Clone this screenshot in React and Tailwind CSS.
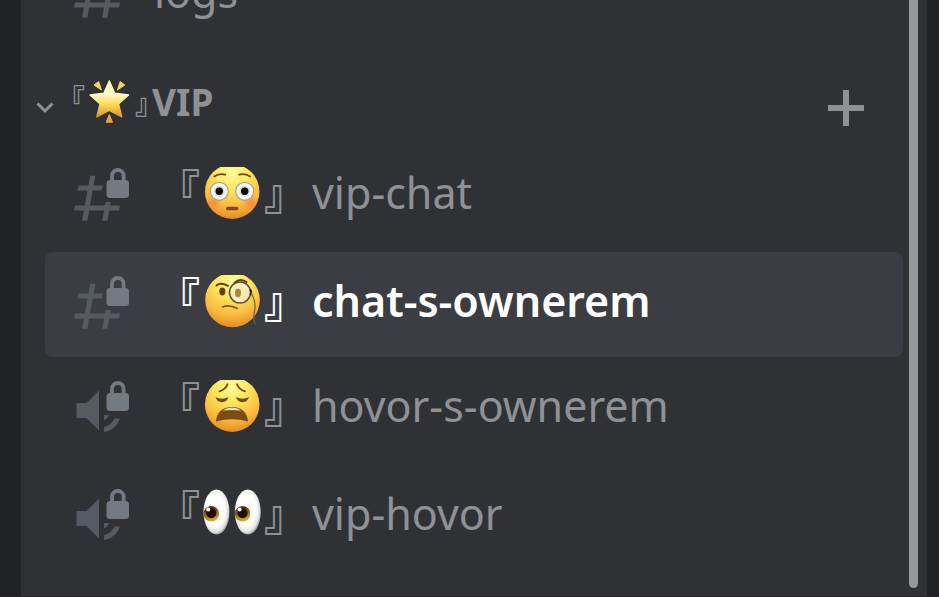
import clsx from "clsx";

const channels = [
    { name: "vip-chat", type: "text", emoji: "flushed" },
    { name: "chat-s-ownerem", type: "text", emoji: "monocle", active: true },
    { name: "hovor-s-ownerem", type: "voice", emoji: "weary" },
    { name: "vip-hovor", type: "voice", emoji: "eyes" },
];

const Lock = () => (
    <g>
        <path d="M40 16V9.8a5.8 5.8 0 0 1 11.6 0V16" fill="none" stroke="#757981" strokeWidth="3.8" />
        <rect x="34.5" y="14" width="22.5" height="18" rx="3.5" fill="#757981" />
    </g>
);

const HashIcon = ({ locked }) => (
    <svg viewBox="0 0 60 60" className="size-[60px] shrink-0 fill-[#565a62]" aria-hidden="true">
        <path d="M18.2 9.7h5.1L15.3 54.8h-5.2z" />
        <path d={locked ? "M6.4 19.4h24.4l-1 5.2H5.4z" : "M6.4 19.4h43l-1 5.2H5.4z"} />
        <path d="M3 39.4h45l-.9 5.2H2z" />
        {locked ? (
            <path d="M33.6 36h5.2l-3.4 18.8h-5.2z" />
        ) : (
            <path d="M38.2 9.7h5.1l-8 45.1h-5.2z" />
        )}
        {locked && <Lock />}
    </svg>
);

const SpeakerIcon = () => (
    <svg viewBox="0 0 60 60" className="size-[60px] shrink-0 fill-[#565a62]" aria-hidden="true">
        <path d="M4.5 24h10L27 11.5v40L14.5 39h-10z" />
        <path d="M32 36h5c-.8 2.6-2.6 4.4-5 5.2z" />
        <path d="M42.5 39.5H48C45.5 46.7 39.5 52 32 53.2v-5.2c4.7-1 8.5-4.2 10.5-8.5z" />
        <Lock />
    </svg>
);

const FaceGradient = ({ id }) => (
    <defs>
        <radialGradient id={id} cx="0.5" cy="0.15" r="0.9">
            <stop offset="0" stopColor="#fffc9a" />
            <stop offset="0.35" stopColor="#fde65c" />
            <stop offset="0.7" stopColor="#f9b940" />
            <stop offset="1" stopColor="#e0811d" />
        </radialGradient>
        <radialGradient id={`${id}-blush`}>
            <stop offset="0" stopColor="#f3673a" stopOpacity="0.5" />
            <stop offset="1" stopColor="#f3673a" stopOpacity="0" />
        </radialGradient>
    </defs>
);

const Flushed = () => (
    <>
        <FaceGradient id="flushed" />
        <circle cx="30.2" cy="25.6" r="27.3" fill="url(#flushed)" />
        <circle cx="12" cy="36" r="8" fill="url(#flushed-blush)" />
        <circle cx="48.5" cy="36" r="8" fill="url(#flushed-blush)" />
        <g fill="none" stroke="#7a3c12" strokeWidth="1.8" strokeLinecap="round">
            <path d="M12.3 10.5q5-3.7 11-1.8" />
            <path d="M48.1 10.5q-5-3.7-11-1.8" />
        </g>
        <g fill="#f7f7f5" stroke="#a99f94" strokeWidth="1.2">
            <circle cx="17.3" cy="25.3" r="9" />
            <circle cx="42.7" cy="25.3" r="9" />
        </g>
        <circle cx="17.3" cy="25.3" r="5.5" fill="#dcdcdc" />
        <circle cx="42.7" cy="25.3" r="5.5" fill="#dcdcdc" />
        <circle cx="17.3" cy="25.3" r="3.7" fill="#0c0a09" />
        <circle cx="42.7" cy="25.3" r="3.7" fill="#0c0a09" />
        <rect x="24" y="40.7" width="12.3" height="3.5" rx="1.5" fill="#87471a" />
    </>
);

const Monocle = () => (
    <>
        <FaceGradient id="monocle" />
        <circle cx="30.5" cy="26" r="27.3" fill="url(#monocle)" />
        <path d="M14.5 11.5q4-3.5 11.5.3" fill="none" stroke="#6b3a10" strokeWidth="2" strokeLinecap="round" />
        <ellipse cx="20.3" cy="17.5" rx="3" ry="4" fill="#6b3a10" />
        <path d="M32.5 9q5-5.5 12-1" fill="none" stroke="#6b3a10" strokeWidth="2" strokeLinecap="round" />
        <circle cx="38" cy="18.5" r="10.5" fill="#eef0c8" fillOpacity="0.75" stroke="#55503f" strokeWidth="1.5" />
        <ellipse cx="36" cy="19" rx="3" ry="4.2" fill="#a98443" />
        <path d="M40 10l4 4M32 24l6 3" stroke="#ffffff" strokeOpacity="0.5" strokeWidth="2" />
        <path d="M47.8 15.5q2 1 1 5.5" fill="none" stroke="#26241f" strokeWidth="2" />
        <path d="M49 19c5 8 5 14 3 21-.6 4 0 7 1.5 10.5" fill="none" stroke="#6c6046" strokeWidth="1.2" />
        <path d="M20.5 33q7-2.8 14.8 1.5" fill="none" stroke="#87561a" strokeWidth="1.6" strokeLinecap="round" />
    </>
);

const Weary = () => (
    <>
        <FaceGradient id="weary" />
        <circle cx="30.2" cy="25.6" r="27.3" fill="url(#weary)" />
        <g fill="none" stroke="#7a4514" strokeWidth="1.9" strokeLinecap="round">
            <path d="M17.5 12.3q6-1.5 8-7" />
            <path d="M43 12.3q-6-1.5-8-7" />
        </g>
        <g fill="#7a4514">
            <path d="M13.5 18q6.5 3.5 13 0-1.5 5.2-6.5 5.2t-6.5-5.2z" />
            <path d="M34 18q6.5 3.5 13 0-1.5 5.2-6.5 5.2t-6.5-5.2z" />
        </g>
        <path d="M14 42.5C14.5 33 21 28 30 28s15.5 5 16 14.5q-16-4.5-32 0z" fill="#7d4d10" />
        <path d="M20.5 31.5Q30 25.5 39.5 31.5q-9.5-1-19 0z" fill="#e4e2dc" />
    </>
);

const Eyes = () => (
    <>
        <defs>
            <radialGradient id="eyeball" cx="0.45" cy="0.45" r="0.55">
                <stop offset="0.65" stopColor="#ffffff" />
                <stop offset="0.9" stopColor="#e3e3e3" />
                <stop offset="1" stopColor="#a9a9a9" />
            </radialGradient>
            <linearGradient id="iris" x1="0" y1="0" x2="0.3" y2="1">
                <stop offset="0.3" stopColor="#6b3407" />
                <stop offset="1" stopColor="#d8a72c" />
            </linearGradient>
        </defs>
        {[14.5, 45.8].map((cx) => (
            <g key={cx}>
                <ellipse cx={cx} cy="25" rx="13" ry="22.5" fill="url(#eyeball)" />
                <circle cx={cx - 5.2} cy="26.7" r="7.7" fill="url(#iris)" />
                <circle cx={cx - 5.2} cy="26.2" r="5" fill="#1d0d04" />
                <circle cx={cx - 8.2} cy="22.6" r="2" fill="#ffffff" />
            </g>
        ))}
    </>
);

const emojis = { flushed: Flushed, monocle: Monocle, weary: Weary, eyes: Eyes };

const Star = () => (
    <svg viewBox="0 0 44 46" className="h-[46px] w-[44px] shrink-0" aria-hidden="true">
        <defs>
            <linearGradient id="star" x1="0" y1="0" x2="0" y2="1">
                <stop offset="0" stopColor="#fff3b0" />
                <stop offset="0.35" stopColor="#fffccf" />
                <stop offset="0.65" stopColor="#fbdc58" />
                <stop offset="1" stopColor="#dd922a" />
            </linearGradient>
        </defs>
        <path
            d="M21.3 2l5.4 12.2 13.8 1.8-10 9 3.2 12.8-12.4-6.5-12.4 6.5 3.2-12.8-10-9 13.8-1.8z"
            fill="url(#star)"
            stroke="url(#star)"
            strokeWidth="1.5"
            strokeLinejoin="round"
        />
        <g fill="#f6d45c" stroke="#f6d45c" strokeLinejoin="round">
            <path d="M6 6l4.7-3.4 2.7 8.4z" />
            <path d="M36.8 6l-4.7-3.4-2.7 8.4z" />
            <path d="M21.3 35.5l3.2 7.7h-6.4z" fill="#e9a53a" stroke="#e9a53a" />
        </g>
    </svg>
);

const Bracket = ({ className, children }) => (
    <span className={clsx("font-['Noto_Sans_CJK_JP',sans-serif] font-bold", className)}>{children}</span>
);

const Channel = ({ name, type, emoji, active }) => {
    const Emoji = emojis[emoji];

    return (
        <li className="mb-[3px] even:mb-0">
            <a
                href="#"
                className={clsx(
                    "flex h-[105px] items-center rounded-lg pb-[2px] pl-[27px] text-[43px] whitespace-nowrap",
                    active ? "bg-[#3c3d42] font-semibold text-white" : "text-[#8f9195]"
                )}
            >
                {type === "voice" ? <SpeakerIcon /> : <HashIcon locked />}
                <span className="ml-[22px] flex items-center">
                    <Bracket className="w-12 pr-[2px] pb-4 text-right">『</Bracket>
                    <svg viewBox="0 1 60 58" className="h-[58px] w-[60px] shrink-0" aria-hidden="true">
                        <Emoji />
                    </svg>
                    <Bracket className="w-[50px] pb-2 pl-[2px]">』</Bracket>
                    <span className="pb-1">{name}</span>
                </span>
            </a>
        </li>
    );
};

const App = () => {
    return (
        <div className="flex h-screen overflow-hidden border-b border-[#29262d] bg-[#212226] font-['Noto_Sans',sans-serif]">
            <div className="w-[21px] shrink-0" />
            <nav className="flex min-w-0 flex-1 flex-col justify-end overflow-hidden bg-[#303135] pr-6 pb-[26px] pl-6">
                <a
                    href="#"
                    className="flex h-[105px] shrink-0 items-center pl-[27px] text-[43px] text-[#8f9195]"
                >
                    <span className="pb-2">
                        <HashIcon />
                    </span>
                    <span className="ml-[22px] pb-2">logs</span>
                </a>
                <div className="flex h-[95px] shrink-0 items-end justify-between pr-[39px] pb-[18px] text-[#8f9195]">
                    <button type="button" className="-ml-3 flex items-end text-[37px] font-bold">
                        <svg viewBox="0 0 24 38" className="h-[38px] w-6" fill="none" stroke="currentColor" aria-hidden="true">
                            <path d="M4.5 15.5l7.5 7.5 7.5-7.5" strokeWidth="3" />
                        </svg>
                        <span className="flex h-[46px] items-center gap-[3px] pb-[2px]">
                            <Bracket className="w-7 pb-2 text-right text-[28px] [font-feature-settings:'halt']">『</Bracket>
                            <Star />
                            <Bracket className="text-[28px] [font-feature-settings:'halt']">』</Bracket>
                            <span>VIP</span>
                        </span>
                    </button>
                    <button type="button" aria-label="Create channel">
                        <svg viewBox="0 0 36 36" className="size-9" fill="currentColor" aria-hidden="true">
                            <path d="M15 0h6v15h15v6H21v15h-6V21H0v-6h15z" />
                        </svg>
                    </button>
                </div>
                <ul className="shrink-0">
                    {channels.map((channel) => (
                        <Channel key={channel.name} {...channel} />
                    ))}
                </ul>
            </nav>
            <div className="mb-2 -ml-[18px] w-[9px] shrink-0 rounded-b-full bg-[#97989a]" />
            <div className="ml-[9px] w-3 shrink-0" />
        </div>
    );
};

export default App;
